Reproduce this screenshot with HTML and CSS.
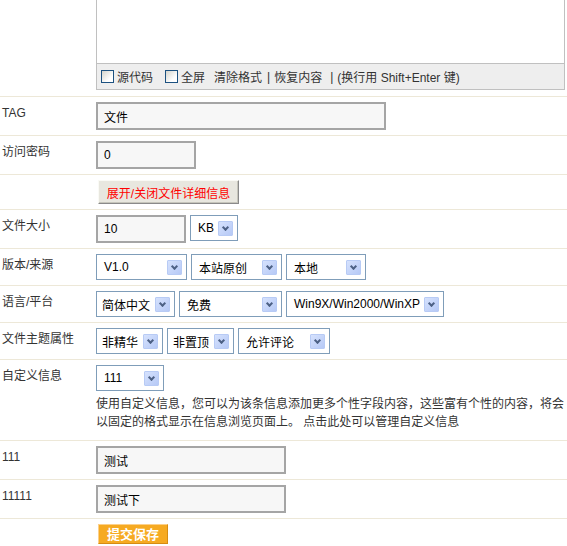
FILE: index.html
```html
<!DOCTYPE html>
<html lang="zh-CN">
<head>
  <meta charset="UTF-8" />
  <title>发布文件</title>
  <link rel="stylesheet" href="styles.css">
</head>
<body>
  <form class="form">
    <div class="row">
      <div class="label"></div>
      <div class="field">
        <div class="editor">
          <div class="editor-body"></div>
          <div class="editor-bar">
            <span class="chk"></span><span class="bar-txt">源代码</span>
            <span class="chk chk-2"></span><span class="bar-txt">全屏</span>
            <span class="bar-link">清除格式</span>
            <span class="bar-sep">|</span>
            <span class="bar-txt">恢复内容</span>
            <span class="bar-sep bar-sep-2">|</span>
            <span class="bar-txt">(换行用 Shift+Enter 键)</span>
          </div>
        </div>
      </div>
    </div>

    <div class="row">
      <div class="label">TAG</div>
      <div class="field"><input class="txt txt-long" value="文件"></div>
    </div>

    <div class="row">
      <div class="label">访问密码</div>
      <div class="field"><input class="txt txt-short" value="0"></div>
    </div>

    <div class="row">
      <div class="label"></div>
      <div class="field"><button type="button" class="btn-toggle">展开/关闭文件详细信息</button></div>
    </div>

    <div class="row">
      <div class="label">文件大小</div>
      <div class="field inline">
        <input class="txt txt-size" value="10">
        <span class="sel w48">KB<i class="arr"></i></span>
      </div>
    </div>

    <div class="row">
      <div class="label">版本/来源</div>
      <div class="field inline">
        <span class="sel w91">V1.0<i class="arr"></i></span>
        <span class="sel w91">本站原创<i class="arr"></i></span>
        <span class="sel w80">本地<i class="arr"></i></span>
      </div>
    </div>

    <div class="row">
      <div class="label">语言/平台</div>
      <div class="field inline">
        <span class="sel w79 tight">简体中文<i class="arr"></i></span>
        <span class="sel w103">免费<i class="arr"></i></span>
        <span class="sel w158">Win9X/Win2000/WinXP<i class="arr"></i></span>
      </div>
    </div>

    <div class="row">
      <div class="label">文件主题属性</div>
      <div class="field inline">
        <span class="sel w67 tight">非精华<i class="arr"></i></span>
        <span class="sel w67 tight">非置顶<i class="arr"></i></span>
        <span class="sel w92">允许评论<i class="arr"></i></span>
      </div>
    </div>

    <div class="row">
      <div class="label">自定义信息</div>
      <div class="field">
        <span class="sel w68">111<i class="arr"></i></span>
        <p class="tip">使用自定义信息，您可以为该条信息添加更多个性字段内容，这些富有个性的内容，将会以固定的格式显示在信息浏览页面上。 点击此处可以管理自定义信息</p>
      </div>
    </div>

    <div class="row">
      <div class="label">111</div>
      <div class="field"><input class="txt txt-mid" value="测试"></div>
    </div>

    <div class="row">
      <div class="label">11111</div>
      <div class="field"><input class="txt txt-mid" value="测试下"></div>
    </div>

    <div class="row last">
      <div class="label"></div>
      <div class="field"><button type="button" class="btn-save">提交保存</button></div>
    </div>
  </form>
</body>
</html>
```

FILE: styles.css
```css
body {
  margin: 0;
  background: #fff;
  color: #333;
  font-family: "Liberation Sans", "Noto Sans CJK SC", sans-serif;
  font-size: 12px;
  overflow: hidden;
}

.row {
  display: grid;
  grid-template-columns: 96px 1fr;
  padding: 5px 0;
  border-bottom: 1px solid #ede8d8;
}

.row:first-child {
  padding-top: 0;
  padding-bottom: 6px;
}

.row.last {
  border-bottom: none;
}

.label {
  padding: 4px 0 0 2px;
  line-height: 14px;
}

.field.inline {
  display: flex;
  gap: 4px;
}

/* editor */
.editor {
  width: 469px;
  box-sizing: border-box;
  border: 1px solid #c0c0c0;
  border-top: none;
}

.editor-body {
  height: 63px;
  background: #fff;
}

.editor-bar {
  display: flex;
  align-items: center;
  height: 25px;
  padding-left: 4px;
  background: #eee;
  border-top: 1px solid #c0c0c0;
  color: #333;
  white-space: pre;
}

.chk {
  width: 11px;
  height: 11px;
  border: 1px solid #1c5180;
  background: linear-gradient(135deg, #d4d4cc, #fff 70%);
  margin-right: 3px;
}

.chk-2 {
  margin-left: 12px;
}

.bar-link {
  margin-left: 9px;
}

.bar-sep {
  margin: 0 4px 0 5px;
}

.bar-sep-2 {
  margin: 0 4px 0 8px;
}

/* inputs */
.txt {
  display: block;
  box-sizing: border-box;
  height: 28px;
  margin: 0;
  padding: 0 6px;
  border: 2px solid #a5a5a5;
  background: #f7f7f7;
  color: #000;
  font: 12px "Liberation Sans", "Noto Sans CJK SC", sans-serif;
  outline: none;
}

.txt-long { width: 290px; }
.txt-short { width: 100px; }
.txt-size { width: 90px; }
.txt-mid { width: 190px; }

/* drop-downs */
.sel {
  display: inline-flex;
  align-items: center;
  justify-content: space-between;
  box-sizing: border-box;
  height: 26px;
  padding: 0 4px 0 7px;
  border: 1px solid #7f9db9;
  background: #fff;
  color: #000;
  font-size: 12px;
  white-space: nowrap;
}

.sel.tight {
  padding-left: 5px;
}

.arr {
  flex: none;
  position: relative;
  width: 15px;
  height: 15px;
  box-sizing: border-box;
  border: 1px solid #b8cbf5;
  border-radius: 1px;
  background: linear-gradient(135deg, #d6e2fd, #b6c9f6);
}

.arr::after {
  content: "";
  position: absolute;
  left: 4px;
  top: 3px;
  width: 3px;
  height: 3px;
  border: solid #4d6185;
  border-width: 0 2px 2px 0;
  transform: rotate(45deg);
}

.w48 { width: 48px; }
.w67 { width: 67px; }
.w68 { width: 68px; }
.w79 { width: 79px; }
.w80 { width: 80px; }
.w91 { width: 91px; }
.w92 { width: 92px; }
.w103 { width: 103px; }
.w158 { width: 158px; }

.tip {
  margin: 4px 0;
  line-height: 18px;
  color: #333;
}

/* buttons */
.btn-toggle {
  display: block;
  width: 141px;
  height: 24px;
  margin-left: 2px;
  padding: 0;
  border: 1px solid;
  border-color: #fafaf5 #8a8a8a #8a8a8a #fafaf5;
  box-shadow: inset -1px -1px 0 #c6c5bb;
  background: #e8e7df;
  color: #f00;
  font: 12px "Liberation Sans", "Noto Sans CJK SC", sans-serif;
}

.btn-save {
  display: block;
  width: 70px;
  height: 20px;
  margin-left: 2px;
  padding: 0;
  border: 1px solid;
  border-color: #fcd08a #d68c12 #d68c12 #fcd08a;
  background: #f6aa22;
  color: #fff;
  font: bold 13px "Noto Sans CJK SC", sans-serif;
  line-height: 18px;
}
```
